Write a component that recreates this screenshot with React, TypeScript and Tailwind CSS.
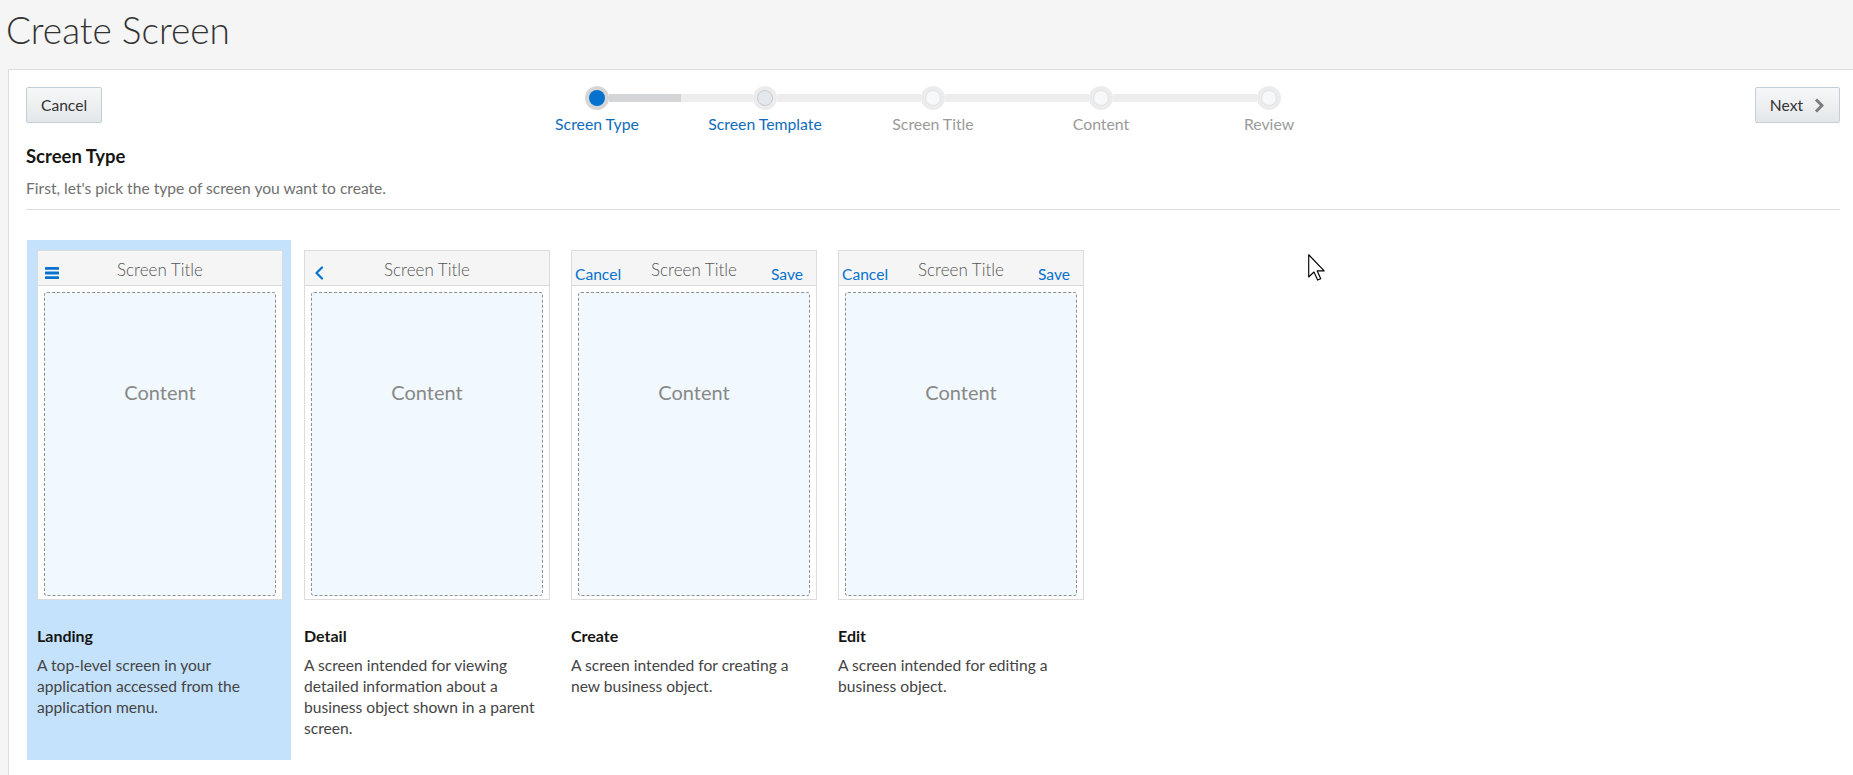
import React from 'react';

type StepState = 'current' | 'visited' | 'todo';

const steps: { label: string; state: StepState }[] = [
  { label: 'Screen Type', state: 'current' },
  { label: 'Screen Template', state: 'visited' },
  { label: 'Screen Title', state: 'todo' },
  { label: 'Content', state: 'todo' },
  { label: 'Review', state: 'todo' },
];

type HeaderKind = 'menu' | 'back' | 'actions';

const screenTypes: { name: string; desc: string; header: HeaderKind; selected?: boolean }[] = [
  {
    name: 'Landing',
    desc: 'A top-level screen in your application accessed from the application menu.',
    header: 'menu',
    selected: true,
  },
  {
    name: 'Detail',
    desc: 'A screen intended for viewing detailed information about a business object shown in a parent screen.',
    header: 'back',
  },
  { name: 'Create', desc: 'A screen intended for creating a new business object.', header: 'actions' },
  { name: 'Edit', desc: 'A screen intended for editing a business object.', header: 'actions' },
];

const MenuIcon = () => (
  <svg width="14" height="12" viewBox="0 0 14 12" fill="#0572ce">
    <rect x="0" y="0" width="14" height="2.8" rx="0.6" />
    <rect x="0" y="4.6" width="14" height="2.8" rx="0.6" />
    <rect x="0" y="9.2" width="14" height="2.8" rx="0.6" />
  </svg>
);

const BackIcon = () => (
  <svg width="10" height="14" viewBox="0 0 10 14" fill="none" stroke="#0572ce" strokeWidth="2.2" strokeLinecap="round" strokeLinejoin="round">
    <path d="M8 1.5 L2.5 7 L8 12.5" />
  </svg>
);

const NextIcon = () => (
  <svg width="10" height="15" viewBox="0 0 10 15" fill="none" stroke="#7a7a7a" strokeWidth="3" strokeLinejoin="miter">
    <path d="M2 1.5 L8 7.5 L2 13.5" />
  </svg>
);

const Step: React.FC<{ label: string; state: StepState; first: boolean; last: boolean }> = ({ label, state, first, last }) => {
  const leftBar = first ? 'bg-transparent' : 'bg-[#ededed]';
  const rightBar = last ? 'bg-transparent' : state === 'current' ? 'bg-[#d4d5d7]' : 'bg-[#ededed]';
  return (
    <div className="flex w-[168px] flex-col items-center">
      <div className="flex w-full items-center">
        <div className={`h-[8px] flex-1 ${leftBar}`} />
        <div
          className={`flex h-6 w-6 items-center justify-center rounded-full ${
            state === 'current' ? 'bg-[#d6d6d6]' : 'bg-[#ececec]'
          }`}
        >
          {state === 'current' && <div className="h-4 w-4 rounded-full bg-[#0572ce]" />}
          {state === 'visited' && <div className="h-4 w-4 rounded-full border border-[#c5ccd3] bg-[#e4e8ec]" />}
          {state === 'todo' && <div className="h-4 w-4 rounded-full border border-[#e0e3e6] bg-[#f7f8fa]" />}
        </div>
        <div className={`h-[8px] flex-1 ${rightBar}`} />
      </div>
      <div
        className={`mt-[4px] whitespace-nowrap text-[15.8px] leading-[20px] ${
          state === 'todo' ? 'text-[#9a9a9a]' : 'text-[#0f6cbd]'
        }`}
      >
        {label}
      </div>
    </div>
  );
};

const ScreenHeader: React.FC<{ kind: HeaderKind }> = ({ kind }) => (
  <div className="grid h-[35px] grid-cols-[1fr_auto_1fr] items-start border-b border-[#d9d9d9] bg-[#f5f5f5]">
    <div className="flex justify-start">
      {kind === 'menu' && (
        <div className="mt-[16px] pl-[7px]">
          <MenuIcon />
        </div>
      )}
      {kind === 'back' && (
        <div className="mt-[15px] pl-[9px]">
          <BackIcon />
        </div>
      )}
      {kind === 'actions' && <span className="mt-[14px] pl-[3px] text-[15.6px] leading-[18px] text-[#0572ce]">Cancel</span>}
    </div>
    <div className="mt-[9px] whitespace-nowrap text-[17px] font-light leading-[20px] text-[#555555]">Screen Title</div>
    <div className="flex justify-end">
      {kind === 'actions' && <span className="mt-[14px] pr-[13px] text-[15.6px] leading-[18px] text-[#0572ce]">Save</span>}
    </div>
  </div>
);

const ScreenCard: React.FC<{ name: string; desc: string; header: HeaderKind; selected?: boolean }> = ({
  name,
  desc,
  header,
  selected,
}) => (
  <div className={`h-[520px] w-[264px] shrink-0 pl-[10px] pr-[8px] pt-[10px] ${selected ? 'bg-[#c4e2fb]' : 'bg-white'}`}>
    <div className="flex h-[350px] w-[246px] flex-col border border-[#dcdcdc] bg-white">
      <ScreenHeader kind={header} />
      <div className="mx-[6px] mb-[3px] mt-[6px] flex-1 rounded-[3px] border border-dashed border-[#8f8f8f] bg-[#f1f8fe] pt-[86px] text-center text-[20px] leading-[26px] text-[#888888]">
        Content
      </div>
    </div>
    <div className="mt-[26px] text-[16px] font-bold leading-[20px] text-[#161513]">{name}</div>
    <div className="mt-[9px] w-[240px] text-[15.6px] leading-[21px] text-[#444444]">{desc}</div>
  </div>
);

const Cursor = () => (
  <svg width="17" height="27" viewBox="0 0 12 19" className="absolute left-[1308px] top-[254px]">
    <path d="M0.5 0.5 L0.5 16.2 L4.2 12.7 L6.8 18.4 L9 17.4 L6.5 11.9 L11.4 11.9 Z" fill="#ffffff" stroke="#000000" strokeWidth="0.8" strokeLinejoin="round" />
  </svg>
);

export default function App() {
  return (
    <div className="relative flex h-[775px] flex-col overflow-hidden bg-[#f5f5f5] font-['Lato','Liberation_Sans',sans-serif] text-[#333333]">
      {/* Page title */}
      <div className="h-[69px] shrink-0 pl-[6px] pt-[7px]">
        <h1 className="text-[37px] font-light leading-[46px] text-[#333333]">Create Screen</h1>
      </div>

      {/* Wizard panel */}
      <div className="ml-2 flex-1 border-l border-t border-[#dcdcdc] bg-white pl-[17px] pr-[13px] pt-[17px]">
        <div className="grid grid-cols-[1fr_auto_1fr] items-start">
          <div className="flex justify-start">
            <button className="h-[36px] rounded-[2px] border border-[#c4ced7] bg-gradient-to-b from-[#f6f7f8] to-[#e4e7ea] px-[14px] text-[15.6px] leading-[20px] text-[#333333]">
              Cancel
            </button>
          </div>
          <div className="-mt-px flex">
            {steps.map((s, i) => (
              <Step key={s.label} label={s.label} state={s.state} first={i === 0} last={i === steps.length - 1} />
            ))}
          </div>
          <div className="flex justify-end">
            <button className="flex h-[36px] items-center gap-[11px] rounded-[2px] border border-[#c4ced7] bg-gradient-to-b from-[#f6f7f8] to-[#e4e7ea] pl-[14px] pr-[15px] text-[15.6px] leading-[20px] text-[#333333]">
              Next
              <NextIcon />
            </button>
          </div>
        </div>

        <h2 className="mt-[11px] text-[18.5px] font-bold leading-[22px] text-[#161513]">Screen Type</h2>
        <p className="mt-[11px] text-[15.6px] leading-[20px] text-[#6f6f6f]">First, let's pick the type of screen you want to create.</p>
        <div className="mt-[11px] h-px bg-[#d9dfe3]" />

        <div className="mt-[30px] flex gap-[3px] pl-px">
          {screenTypes.map((t) => (
            <ScreenCard key={t.name} {...t} />
          ))}
        </div>
      </div>

      <Cursor />
    </div>
  );
}
